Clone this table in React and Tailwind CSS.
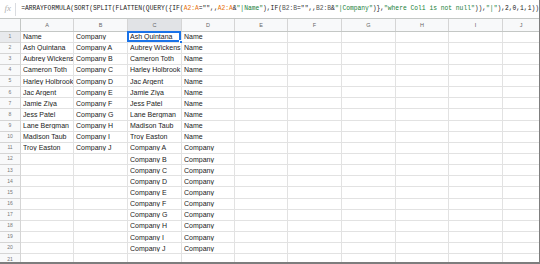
import React from "react";

const cols = [
	{ key: "A", w: "w-[53px]" },
	{ key: "B", w: "w-[54px]" },
	{ key: "C", w: "w-[54px]" },
	{ key: "D", w: "w-[53px]" },
	{ key: "E", w: "w-[53px]" },
	{ key: "F", w: "w-[54px]" },
	{ key: "G", w: "w-[54px]" },
	{ key: "H", w: "w-[53px]" },
	{ key: "I", w: "w-[54px]" },
	{ key: "J", w: "w-[37px]" },
];

const names = [
	"Ash Quintana",
	"Aubrey Wickens",
	"Cameron Toth",
	"Harley Holbrook",
	"Jac Argent",
	"Jamie Ziya",
	"Jess Patel",
	"Lane Bergman",
	"Madison Taub",
	"Troy Easton",
];
const companies = "ABCDEFGHIJ".split("").map((l) => "Company " + l);

const buildRows = () => {
	const rows = [];
	for (let i = 0; i < 21; i++) {
		const r = { A: "", B: "", C: "", D: "" };
		if (i === 0) {
			r.A = "Name";
			r.B = "Company";
		} else if (i <= 10) {
			r.A = names[i - 1];
			r.B = companies[i - 1];
		}
		if (i < 10) {
			r.C = names[i];
			r.D = "Name";
		} else if (i < 20) {
			r.C = companies[i - 10];
			r.D = "Company";
		}
		rows.push(r);
	}
	return rows;
};

// formula pieces: [text, colour]
const formula = [
	["=ARRAYFORMULA(SORT(SPLIT(FLATTEN(QUERY({IF(", ""],
	["A2:A", "text-[#e8710a]"],
	['="",,', ""],
	["A2:A", "text-[#e8710a]"],
	["&", ""],
	['"|Name"', "text-[#188038]"],
	["),IF(", ""],
	["B2:B", "text-[#555]"],
	['="",,', ""],
	["B2:B", "text-[#555]"],
	["&", ""],
	['"|Company"', "text-[#188038]"],
	[")},", ""],
	['"where Col1 is not null"', "text-[#188038]"],
	[")),", ""],
	['"|"', "text-[#188038]"],
	["),2,0,1,1))", ""],
];

export default function App() {
	const rows = buildRows();
	return (
		<div
			className="w-[540px] h-[264px] overflow-hidden bg-white border-r border-b-2 border-[#7d7d7d] text-[#222]"
			style={{ fontFamily: '"Liberation Sans", Arial, sans-serif' }}
		>
			<div className="h-[19px] flex items-center border-b border-[#c4c7c5]">
				<div className="w-[21px] h-full flex items-center justify-center">
					<span className="italic text-[9px] text-[#b0b0b0]" style={{ fontFamily: '"Liberation Serif", serif' }}>
						fx
					</span>
				</div>
				<div className="w-px h-[13px] bg-[#dadce0]" />
				<div className="pl-[5px] whitespace-pre text-[6.3px] text-[#222]" style={{ fontFamily: '"Liberation Mono", monospace' }}>
					{formula.map(([t, c], i) => (
						<span key={i} className={c}>
							{t}
						</span>
					))}
				</div>
			</div>
			<div className="flex h-[12.5px] bg-[#f8f9fa] border-b border-[#c4c7c5]">
				<div className="w-[21px] shrink-0 border-r border-[#c4c7c5]" />
				{cols.map((c) => (
					<div
						key={c.key}
						className={`${c.w} shrink-0 flex items-center justify-center text-[5.5px] text-[#666] border-r border-[#d5d5d5] ${c.key === "C" ? "bg-[#e1e3e6]" : ""}`}
					>
						{c.key}
					</div>
				))}
			</div>
			{rows.map((r, i) => (
				<div key={i} className="flex h-[11.15px]">
					<div
						className={`w-[21px] shrink-0 flex items-center justify-center text-[5px] text-[#777] border-r border-b border-[#d5d5d5] ${i === 0 ? "bg-[#e8eaed]" : "bg-[#f8f9fa]"}`}
					>
						{i + 1}
					</div>
					{cols.map((c) => {
						const sel = i === 0 && c.key === "C";
						return (
							<div
								key={c.key}
								className={`${c.w} shrink-0 relative flex items-center pl-[2px] text-[7px] leading-none whitespace-nowrap border-r border-b border-[#e2e2e2]`}
							>
								<span className="overflow-hidden block w-full">{r[c.key] || ""}</span>
								{sel && (
									<>
										<div className="absolute -left-px -top-px right-0 bottom-0 border-2 border-[#1a73e8]" />
										<div className="absolute -right-[2px] -bottom-[2px] w-[4px] h-[4px] bg-[#1a73e8] border border-white" />
									</>
								)}
							</div>
						);
					})}
				</div>
			))}
		</div>
	);
}
